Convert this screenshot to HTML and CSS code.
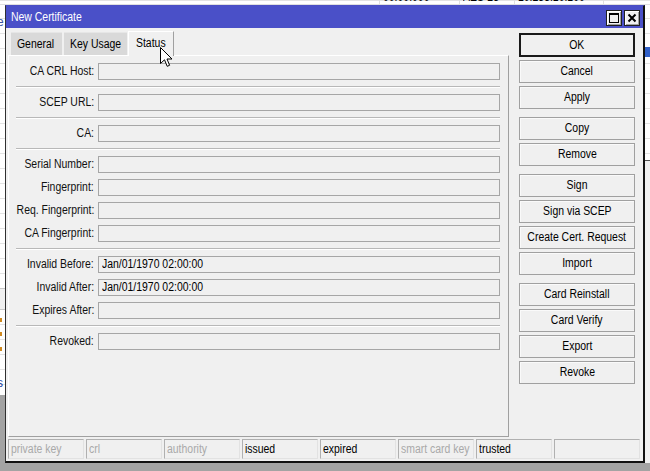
FILE: index.html
```html
<!DOCTYPE html>
<html>
<head>
<meta charset="utf-8">
<title>New Certificate</title>
<link rel="stylesheet" href="styles.css">
</head>
<body>
<div class="desktop">
  <div class="bg-list">
    <div class="bg-toprow">
      <span class="bg-cell bc1"><span class="t">00:00:000</span></span>
      <span class="bg-cell bc2"><span class="t">AES-25</span></span>
      <span class="bg-cell bc3"><span class="t">10.255.10.100</span></span>
    </div>
    <span class="bg-e">e</span>
    <span class="bg-sel"></span>
  </div>
  <div class="bg-band"></div>
  <div class="bg-rows">
    <span class="mark m1"></span>
    <span class="mark m2"></span>
    <span class="mark m3"></span>
    <span class="bg-s">s</span>
  </div>
  <div class="bg-right"></div>

  <div class="window">
    <div class="titlebar">
      <span class="title"><span class="t">New Certificate</span></span>
      <div class="tb-buttons">
        <span class="tb-btn">
          <svg width="10" height="10" viewBox="0 0 10 10"><rect x="0.5" y="0.5" width="9" height="9" fill="none" stroke="#000" stroke-width="1"/><rect x="0" y="0" width="10" height="2" fill="#000"/></svg>
        </span>
        <span class="tb-btn">
          <svg width="10" height="10" viewBox="0 0 10 10"><path d="M1.5 1.5 L8.5 8.5 M8.5 1.5 L1.5 8.5" stroke="#000" stroke-width="2" fill="none"/></svg>
        </span>
      </div>
    </div>
    <div class="win-body">
      <div class="main">
        <div class="left">
          <div class="tabs">
            <div class="tab t-general"><span class="t">General</span></div>
            <div class="tab t-key"><span class="t">Key Usage</span></div>
            <div class="tab active"><span class="t">Status</span></div>
          </div>
          <div class="panel">
            <div class="group">
              <div class="row"><span class="lbl"><span class="t">CA CRL Host:</span></span><div class="field"></div></div>
            </div>
            <div class="sep"></div>
            <div class="group">
              <div class="row"><span class="lbl"><span class="t">SCEP URL:</span></span><div class="field"></div></div>
            </div>
            <div class="sep"></div>
            <div class="group">
              <div class="row"><span class="lbl"><span class="t">CA:</span></span><div class="field"></div></div>
            </div>
            <div class="sep"></div>
            <div class="group">
              <div class="row"><span class="lbl"><span class="t">Serial Number:</span></span><div class="field"></div></div>
              <div class="row"><span class="lbl"><span class="t">Fingerprint:</span></span><div class="field"></div></div>
              <div class="row"><span class="lbl"><span class="t">Req. Fingerprint:</span></span><div class="field"></div></div>
              <div class="row"><span class="lbl"><span class="t">CA Fingerprint:</span></span><div class="field"></div></div>
            </div>
            <div class="sep"></div>
            <div class="group">
              <div class="row"><span class="lbl"><span class="t">Invalid Before:</span></span><div class="field"><span class="t">Jan/01/1970 02:00:00</span></div></div>
              <div class="row"><span class="lbl"><span class="t">Invalid After:</span></span><div class="field"><span class="t">Jan/01/1970 02:00:00</span></div></div>
              <div class="row"><span class="lbl"><span class="t">Expires After:</span></span><div class="field"></div></div>
            </div>
            <div class="sep"></div>
            <div class="group">
              <div class="row"><span class="lbl"><span class="t">Revoked:</span></span><div class="field"></div></div>
            </div>
          </div>
        </div>
        <div class="buttons">
          <div class="btn-group">
            <div class="btn default"><span class="t">OK</span></div>
            <div class="btn"><span class="t">Cancel</span></div>
            <div class="btn"><span class="t">Apply</span></div>
          </div>
          <div class="btn-group">
            <div class="btn"><span class="t">Copy</span></div>
            <div class="btn"><span class="t">Remove</span></div>
          </div>
          <div class="btn-group">
            <div class="btn"><span class="t">Sign</span></div>
            <div class="btn"><span class="t">Sign via SCEP</span></div>
            <div class="btn"><span class="t">Create Cert. Request</span></div>
            <div class="btn"><span class="t">Import</span></div>
          </div>
          <div class="btn-group">
            <div class="btn"><span class="t">Card Reinstall</span></div>
            <div class="btn"><span class="t">Card Verify</span></div>
            <div class="btn"><span class="t">Export</span></div>
            <div class="btn"><span class="t">Revoke</span></div>
          </div>
        </div>
      </div>
      <div class="statusbar">
        <div class="cell off"><span class="t">private key</span></div>
        <div class="cell off"><span class="t">crl</span></div>
        <div class="cell off"><span class="t">authority</span></div>
        <div class="cell"><span class="t">issued</span></div>
        <div class="cell"><span class="t">expired</span></div>
        <div class="cell off"><span class="t">smart card key</span></div>
        <div class="cell"><span class="t">trusted</span></div>
        <div class="cell last"></div>
      </div>
    </div>
  </div>

  <svg class="cursor" width="13" height="21" viewBox="0 0 13 21">
    <path d="M0.5 0.5 L0.5 16.5 L4.5 12.8 L7.2 19.3 L9.6 18.3 L7 12 L12 12 Z" fill="#fff" stroke="#000" stroke-width="1" stroke-linejoin="miter"/>
  </svg>
</div>
</body>
</html>
```

FILE: styles.css
```css
* { box-sizing: border-box; }

html, body {
  margin: 0;
  padding: 0;
}

body {
  font-family: "Liberation Sans", Arial, sans-serif;
  font-size: 12px;
  color: #000;
  background: #a3a3a3;
}

/* narrow text, like Arial Narrow */
.t {
  display: inline-block;
  white-space: nowrap;
  transform: scaleX(0.87);
  transform-origin: left center;
}

.desktop {
  position: relative;
  width: 650px;
  height: 471px;
  overflow: hidden;
  background: #a3a3a3;
}

/* ---------- things behind the dialog ---------- */
.bg-list {
  position: absolute;
  left: 0;
  top: 0;
  width: 650px;
  height: 288px;
  background-color: #fff;
  background-image: repeating-linear-gradient(to bottom, transparent 0, transparent 14px, #e3e3e3 14px, #e3e3e3 15px);
  background-position: 0 4px;
}

.bg-toprow {
  position: absolute;
  left: 0;
  top: -9px;
  width: 650px;
  height: 14px;
  line-height: 12px;
  border-bottom: 1px solid #e0e0e0;
}

.bg-cell {
  position: absolute;
  top: 0;
  height: 14px;
  padding-left: 3px;
  border-left: 1px solid #e0e0e0;
  color: #000;
}

.bc1 { left: 379px; width: 80px; }
.bc2 { left: 459px; width: 55px; }
.bc3 { left: 514px; width: 90px; border-right: 1px solid #e0e0e0; }

.bg-e {
  position: absolute;
  left: -3px;
  top: 15px;
  color: #3a55a0;
}

.bg-sel {
  position: absolute;
  left: 645px;
  top: 47px;
  width: 5px;
  height: 10px;
  background: #3060c8;
}

.bg-band {
  position: absolute;
  left: 0;
  top: 288px;
  width: 650px;
  height: 22px;
  background: #f0f0f0;
  border-top: 1px solid #c8c8c8;
  border-bottom: 1px solid #c8c8c8;
}

.bg-rows {
  position: absolute;
  left: 0;
  top: 310px;
  width: 650px;
  height: 85px;
  background-color: #fff;
  background-image: repeating-linear-gradient(to bottom, transparent 0, transparent 14px, #e3e3e3 14px, #e3e3e3 15px);
}

.mark {
  position: absolute;
  left: 0;
  width: 2px;
  height: 4px;
  background: #d08a20;
}
.m1 { top: 8px; }
.m2 { top: 22px; }
.m3 { top: 37px; }

.bg-s {
  position: absolute;
  left: -3px;
  top: 66px;
  color: #2040a0;
}

.bg-right {
  position: absolute;
  left: 644px;
  top: 160px;
  width: 6px;
  height: 303px;
  background: #f0f0f0;
  border-top: 1px solid #505050;
}

/* ---------- dialog window ---------- */
.window {
  position: absolute;
  left: 5px;
  top: 5px;
  width: 640px;
  height: 458px;
  display: flex;
  flex-direction: column;
  background: #f0f0f0;
  border-top: 1px solid #4a4fc4;
  border-left: 1px solid #303030;
  border-right: 2px solid #111;
  border-bottom: 2px solid #111;
}

.titlebar {
  height: 22px;
  flex: none;
  display: flex;
  align-items: flex-start;
  justify-content: space-between;
  background: #4a50c8;
  color: #fff;
}

.title {
  padding-left: 5px;
  line-height: 22px;
  font-size: 12px;
}

.tb-buttons {
  display: flex;
  gap: 2px;
  padding-top: 4px;
  padding-right: 3px;
}

.tb-btn {
  width: 16px;
  height: 16px;
  display: flex;
  align-items: center;
  justify-content: center;
  background: #f0f0f0;
  border: 1px solid #202020;
  box-shadow: inset 1px 1px 0 #fff, inset -1px -1px 0 #a0a0a0;
}

.win-body {
  flex: 1;
  display: flex;
  flex-direction: column;
}

.main {
  display: flex;
  height: 409px;
}

.left {
  margin-left: 2px;
  width: 501px;
  display: flex;
  flex-direction: column;
}

.tabs {
  height: 27px;
  display: flex;
  align-items: flex-end;
  padding-left: 3px;
}

.tab {
  height: 23px;
  line-height: 22px;
  background: #d9d9d9;
  border-top: 1px solid #e6e6e6;
  margin-right: 2px;
  padding-left: 6px;
  white-space: nowrap;
}

.t-general { width: 51px; }
.t-key { width: 63px; margin-right: 1px; }

.tab.active {
  height: 25px;
  width: 46px;
  line-height: 22px;
  background: #f0f0f0;
  border-top: 1px solid #fff;
  border-left: 1px solid #fff;
  border-right: 1px solid #a0a0a0;
  padding-left: 7px;
  margin-bottom: -1px;
  position: relative;
}

.panel {
  height: 382px;
  padding-top: 1px;
  border-top: 1px solid #fff;
  border-left: 1px solid #fff;
  border-right: 1px solid #a0a0a0;
  border-bottom: 1px solid #a0a0a0;
}

.group {
  padding: 6px 8px 6px 0;
  display: flex;
  flex-direction: column;
  gap: 6px;
}

.row {
  display: flex;
  align-items: center;
  height: 17px;
}

.lbl {
  width: 85px;
  margin-right: 4px;
  display: flex;
  justify-content: flex-end;
  color: #111;
  line-height: 17px;
}

.lbl .t { transform-origin: right center; }

.field {
  width: 402px;
  height: 17px;
  border: 1px solid #a6a6a6;
  background: #f0f0f0;
  padding-left: 3px;
  line-height: 15px;
  white-space: nowrap;
  color: #000;
}

.sep {
  height: 2px;
  margin: 0 8px 0 7px;
  border-top: 1px solid #b8b8b8;
  border-bottom: 1px solid #fff;
}

.buttons {
  width: 116px;
  margin-left: 10px;
  padding-top: 5px;
  display: flex;
  flex-direction: column;
  gap: 8px;
}

.btn-group {
  display: flex;
  flex-direction: column;
  gap: 3px;
}

.btn {
  height: 23px;
  line-height: 21px;
  display: flex;
  justify-content: center;
  background: #f0f0f0;
  border: 1px solid #a0a0a0;
  box-shadow: inset 1px 1px 0 #fafafa;
  color: #000;
}

.btn .t { transform-origin: center center; }

.btn.default {
  height: 24px;
  line-height: 20px;
  border: 2px solid #1a1a1a;
  box-shadow: none;
}

.statusbar {
  margin-top: 2px;
  height: 20px;
  padding-left: 2px;
  display: flex;
  gap: 2px;
}

.cell {
  width: 76px;
  height: 20px;
  line-height: 18px;
  padding-left: 2px;
  border: 1px solid;
  border-color: #b0b0b0 #e2e2e2 #e2e2e2 #b0b0b0;
  white-space: nowrap;
  overflow: hidden;
  color: #000;
}

.cell.off { color: #a9a9a9; }
.cell.last { width: 86px; }

.cursor {
  position: absolute;
  left: 160px;
  top: 47px;
}
```
